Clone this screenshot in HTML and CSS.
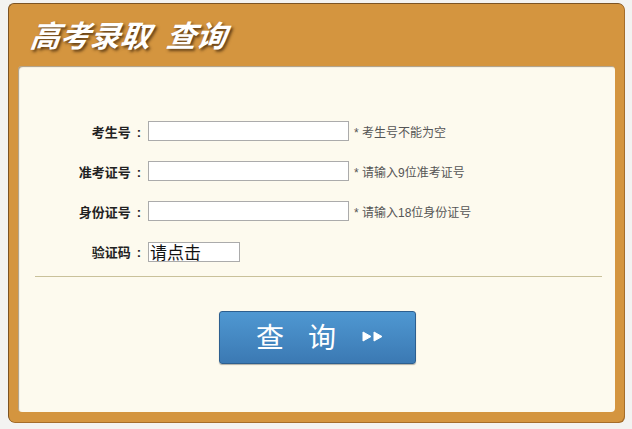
FILE: index.html
```html
<!DOCTYPE html>
<html lang="zh-CN">
<head>
    <meta charset="UTF-8">
    <meta name="viewport" content="width=device-width, initial-scale=1.0">
    <title>高考录取查询</title>
    <link rel="stylesheet" href="styles.css">
</head>
<body>
    <div class="panel">
        <h1 class="panel-title">高考录取<span class="gap"></span>查询</h1>
        <div class="panel-body">
            <div class="form-row">
                <label for="ksh">考生号<span class="colon">:</span></label>
                <input type="text" id="ksh">
                <span class="hint">* 考生号不能为空</span>
            </div>
            <div class="form-row">
                <label for="zkzh">准考证号<span class="colon">:</span></label>
                <input type="text" id="zkzh">
                <span class="hint">* 请输入9位准考证号</span>
            </div>
            <div class="form-row">
                <label for="sfzh">身份证号<span class="colon">:</span></label>
                <input type="text" id="sfzh">
                <span class="hint">* 请输入18位身份证号</span>
            </div>
            <div class="form-row">
                <label for="yzm">验证码<span class="colon">:</span></label>
                <span class="captcha" id="yzm">请点击</span>
            </div>
            <hr class="divider">
            <div class="actions">
                <button class="btn-query"><span>查</span><span class="second">询</span><span class="arrows">
                    <svg width="22" height="11" viewBox="0 0 22 11"><path d="M1 1 L9 5.5 L1 10 Z M12 1 L20 5.5 L12 10 Z" fill="#fff" stroke="#fff" stroke-width="1" stroke-linejoin="round"/></svg>
                </span></button>
            </div>
        </div>
    </div>
</body>
</html>
```
FILE: styles.css
```css
body {
    margin: 0;
    padding: 3px 8px 7px 8px;
    background: #f3f3f1;
    font-family: "Liberation Sans", "Noto Sans CJK SC", sans-serif;
}
.panel {
    width: 616px;
    height: 419px;
    box-sizing: border-box;
    background: #d4953f;
    border-radius: 6px;
    border-top: 1px solid #7c5424;
    border-left: 1px solid #7c5424;
    box-shadow: 1px 1px 0 #a56d2a;
    padding: 0 9px 10px 9px;
    display: flex;
    flex-direction: column;
}
.panel-title {
    margin: 0;
    height: 62px;
    box-sizing: border-box;
    padding: 11px 0 0 9px;
    color: #fff;
    font-family: "Noto Sans CJK SC", sans-serif;
    font-size: 30px;
    font-weight: bold;
    font-style: italic;
    transform: skewX(-7deg);
    transform-origin: left bottom;
    line-height: 38px;
    text-shadow: 2px 2px 3px rgba(60, 35, 10, 0.8);
}
.gap {
    display: inline-block;
    width: 16px;
}
.panel-body {
    flex: 1;
    background: #fdfaee;
    border-radius: 4px;
    box-shadow: inset 1px 1px 1px rgba(90, 60, 20, 0.5);
    padding-top: 55px;
}
.form-row {
    display: flex;
    align-items: center;
    height: 20px;
    margin-bottom: 20px;
}
.form-row label {
    width: 127px;
    text-align: right;
    font-size: 13px;
    font-weight: bold;
    color: #222;
}
.colon {
    margin-left: 6px;
    margin-right: 4px;
}
.form-row input {
    margin: 0 0 0 3px;
    width: 201px;
    height: 20px;
    box-sizing: border-box;
    border: 1px solid #ababab;
    background: #fff;
    padding: 0 3px;
}
.hint {
    margin-left: 5px;
    font-size: 12px;
    color: #555;
}
.captcha {
    margin-left: 3px;
    margin-top: 1px;
    width: 92px;
    height: 20px;
    box-sizing: border-box;
    border: 1px solid #ababab;
    background: #fff;
    font-family: "Noto Sans CJK SC", sans-serif;
    font-size: 17px;
    line-height: 17px;
    padding-left: 1px;
    color: #111;
}
.divider {
    margin: -5px 13px 0 17px;
    border: none;
    border-top: 1px solid #c9c19a;
    height: 0;
}
.actions {
    display: flex;
    justify-content: center;
    padding: 34px 0 0 1px;
}
.btn-query {
    width: 197px;
    height: 53px;
    border: 1px solid #2d5f8f;
    border-radius: 3px;
    background: linear-gradient(#4f98d2, #3b79b3);
    box-shadow: 0 1px 1px rgba(0, 0, 0, 0.3);
    color: #fff;
    font-family: "Noto Sans CJK SC", sans-serif;
    font-size: 28px;
    padding: 0 0 3px 6px;
    display: flex;
    align-items: center;
    justify-content: center;
}
.second {
    margin-left: 24px;
}
.arrows {
    display: flex;
    margin-left: 26px;
}
```
